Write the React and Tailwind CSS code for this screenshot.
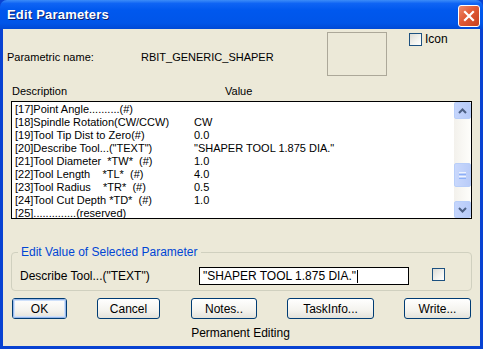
import React from "react";

const rows = [
  ["[17]Point Angle..........(#)", ""],
  ["[18]Spindle Rotation(CW/CCW)", "CW"],
  ["[19]Tool Tip Dist to Zero(#)", "0.0"],
  ["[20]Describe Tool...(\"TEXT\")", "\"SHAPER TOOL 1.875 DIA.\""],
  ["[21]Tool Diameter  *TW*  (#)", "1.0"],
  ["[22]Tool Length    *TL*  (#)", "4.0"],
  ["[23]Tool Radius    *TR*  (#)", "0.5"],
  ["[24]Tool Cut Depth *TD*  (#)", "1.0"],
  ["[25]..............(reserved)", ""],
];

function XpButton({ label, width, focused, className = "" }) {
  return (
    <div
      className={`h-[21px] rounded-[3px] border border-[#003C74] bg-[linear-gradient(to_bottom,#FFFFFF_0%,#F4F3EE_60%,#E3E2DA_100%)] flex items-center justify-center text-black ${className}`}
      style={{ width }}
    >
      <div
        className={`w-full h-full rounded-[2px] flex items-center justify-center ${
          focused ? "shadow-[inset_0_0_0_1px_#98B8EA,inset_0_0_0_2px_#CEE0FA]" : ""
        }`}
      >
        {label}
      </div>
    </div>
  );
}

function Checkbox({ className = "" }) {
  return (
    <div
      className={`w-[13px] h-[13px] border border-[#1C5180] bg-[linear-gradient(135deg,#DCDBD5_0%,#F4F4F0_60%,#FFFFFF_100%)] ${className}`}
    />
  );
}

function ScrollBtn({ up }) {
  return (
    <div className="w-[17px] h-[17px] rounded-[2px] border border-[#B8CEF9] bg-[linear-gradient(to_right,#C5D5FC,#B7CBF8)] flex items-center justify-center">
      <svg width="9" height="6" viewBox="0 0 9 6">
        <path
          d={up ? "M1 5 L4.5 1.5 L8 5" : "M1 1 L4.5 4.5 L8 1"}
          stroke="#4D6185"
          strokeWidth="2"
          fill="none"
        />
      </svg>
    </div>
  );
}

export default function App() {
  return (
    <div
      className="w-[483px] h-[349px] flex flex-col bg-[#0842D2] text-[11px] text-black overflow-hidden"
      style={{ fontFamily: '"Liberation Sans", Arial, sans-serif' }}
    >
      {/* title bar */}
      <div className="h-[29px] shrink-0 flex items-center justify-between pl-[7px] pr-[2px] bg-[linear-gradient(to_bottom,#3C8CF8_0%,#0F64F4_12%,#0058EE_35%,#0055E8_80%,#0049D5_100%)] rounded-t-[7px]">
        <span className="text-white font-bold text-[13px] tracking-[0.2px] [text-shadow:1px_1px_0_#0A1E6E]">
          Edit Parameters
        </span>
        <div className="w-[22px] h-[22px] mt-[2px] mr-[1px] rounded-[3px] border border-white bg-[linear-gradient(135deg,#EE8A6C_0%,#E05A35_45%,#C7401F_100%)] flex items-center justify-center">
          <svg width="12" height="12" viewBox="0 0 12 12">
            <path d="M2 2 L10 10 M10 2 L2 10" stroke="white" strokeWidth="2.2" strokeLinecap="square" />
          </svg>
        </div>
      </div>

      {/* body */}
      <div className="flex-1 mx-[3px] mb-[3px] bg-[#ECE9D8] flex flex-col">
        {/* name row */}
        <div className="flex items-start ml-[4px] mt-[3px] h-[43px]">
          <div className="w-[320px] flex pt-[17px]">
            <span className="w-[134px]">Parametric name:</span>
            <span>RBIT_GENERIC_SHAPER</span>
          </div>
          <div className="w-[60px] h-[44px] border border-[#ACA899]" />
          <div className="flex items-center ml-[22px] mt-[1px] leading-[13px]">
            <Checkbox />
            <span className="ml-[3px] text-[12px]">Icon</span>
          </div>
        </div>

        {/* headings */}
        <div className="flex ml-[9px] mt-[6px] h-[20px] items-center">
          <span className="w-[213px]">Description</span>
          <span>Value</span>
        </div>

        {/* list */}
        <div className="ml-[8px] w-[461px] h-[118px] border border-black bg-white flex">
          <div className="flex-1 pl-[3px] pt-[1px]">
            {rows.map(([d, v], i) => (
              <div key={i} className="h-[13px] flex items-center whitespace-pre">
                <span className="w-[179px]">{d}</span>
                <span>{v}</span>
              </div>
            ))}
          </div>
          <div className="w-[17px] flex flex-col bg-[linear-gradient(to_right,#F3F1EC,#FEFEFB)]">
            <ScrollBtn up />
            <div className="flex-1 pt-[44px]">
              <div className="w-[17px] h-[24px] rounded-[2px] border border-[#B8CEF9] bg-[linear-gradient(to_right,#C9D8FC,#B9CCF8)] flex flex-col items-center justify-center gap-[1px]">
                <div className="w-[7px] h-[1px] bg-[#EEF4FE]" />
                <div className="w-[7px] h-[1px] bg-[#8CB0F8]" />
                <div className="w-[7px] h-[1px] bg-[#EEF4FE]" />
                <div className="w-[7px] h-[1px] bg-[#8CB0F8]" />
              </div>
            </div>
            <ScrollBtn />
          </div>
        </div>

        {/* group box */}
        <div className="relative ml-[8px] mt-[33px] w-[461px] h-[39px] rounded-[4px] border border-[#D0D0BF] flex items-center">
          <span className="absolute left-[6px] -top-[8px] px-[3px] bg-[#ECE9D8] text-[#0046D5] text-[12px] leading-[14px]">
            Edit Value of Selected Parameter
          </span>
          <span className="ml-[8px] mt-[9px] w-[179px] text-[12px]">Describe Tool...("TEXT")</span>
          <div className="mt-[9px] w-[210px] h-[18px] border border-black bg-white flex items-center pl-[3px] text-[12px]">
            "SHAPER TOOL 1.875 DIA."
            <span className="inline-block w-[1px] h-[13px] bg-black ml-[1px]" />
          </div>
          <Checkbox className="ml-[23px] mt-[6px]" />
        </div>

        {/* buttons */}
        <div className="flex ml-[9px] mt-[7px] text-[12px]">
          <XpButton label="OK" width={55} focused />
          <XpButton label="Cancel" width={63} className="ml-[30px]" />
          <XpButton label="Notes.." width={66} className="ml-[31px]" />
          <XpButton label="TaskInfo..." width={87} className="ml-[30px]" />
          <XpButton label="Write..." width={67} className="ml-[30px]" />
        </div>

        <div className="text-center mt-[5px] text-[12px] pr-[2px]">Permanent Editing</div>
      </div>
    </div>
  );
}
